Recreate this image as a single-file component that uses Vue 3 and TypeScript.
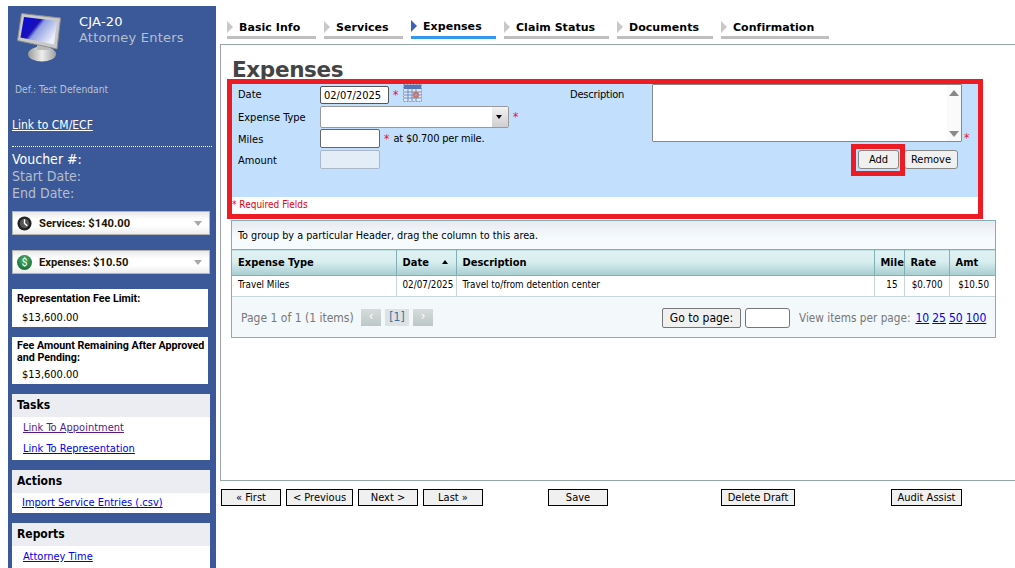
<script setup lang="ts">
const tabs = [
  { label: 'Basic Info', width: 89 },
  { label: 'Services', width: 79 },
  { label: 'Expenses', width: 85, active: true },
  { label: 'Claim Status', width: 105 },
  { label: 'Documents', width: 96 },
  { label: 'Confirmation', width: 108 },
]
const pageSizes = ['10', '25', '50', '100']
</script>

<template>
  <div class="page">
    <aside class="sidebar">
      <header class="brand">
        <svg class="monitor" width="46" height="50" viewBox="0 0 46 50">
          <defs>
            <linearGradient id="scr" x1="0" y1="0" x2="1" y2="0.6">
              <stop offset="0" stop-color="#0a0ad8" />
              <stop offset="0.45" stop-color="#1a10b8" />
              <stop offset="0.55" stop-color="#8f9fe0" />
              <stop offset="1" stop-color="#eef0fa" />
            </linearGradient>
            <linearGradient id="base" x1="0" y1="0" x2="1" y2="0">
              <stop offset="0" stop-color="#9a9a9a" />
              <stop offset="0.5" stop-color="#eeeeee" />
              <stop offset="1" stop-color="#a0a0a0" />
            </linearGradient>
          </defs>
          <ellipse cx="25" cy="41" rx="14" ry="7.5" fill="url(#base)" />
          <path d="M20 31h11l2 6H20z" fill="#bbb" />
          <path d="M4.500 0.500 L43.500 5 L40 36 L0.500 27.500 Z" fill="#c9c9c9" stroke="#8f8f8f" />
          <path d="M7 4 L40 8 L37 31.500 L3.500 24.500 Z" fill="url(#scr)" />
        </svg>
        <div class="brand-text">
          <div class="brand-title">CJA-20</div>
          <div class="brand-sub">Attorney Enters</div>
        </div>
      </header>
      <div class="def">Def.: Test Defendant</div>
      <a class="ecf" href="#">Link to CM/ECF</a>
      <div class="voucher">
        <div class="v-main">Voucher #:</div>
        <div>Start Date:</div>
        <div>End Date:</div>
      </div>

      <div class="total first">
        <svg width="15" height="15" viewBox="0 0 16 16">
          <circle cx="8" cy="8" r="7.500" fill="#222" />
          <circle cx="8" cy="8" r="5" fill="#555" />
          <path d="M8 3.500V8l3 2.500" stroke="#fff" stroke-width="1.500" fill="none" />
        </svg>
        <span class="total-label clock">Services: $140.00</span>
        <span class="total-arrow"></span>
      </div>
      <div class="total">
        <span class="coin">$</span>
        <span class="total-label">Expenses: $10.50</span>
        <span class="total-arrow"></span>
      </div>

      <section class="fee fee-one">
        <div class="fee-title">Representation Fee Limit:</div>
        <div class="fee-val spaced">$13,600.00</div>
      </section>
      <section class="fee fee-two">
        <div class="fee-title">Fee Amount Remaining After Approved and Pending:</div>
        <div class="fee-val">$13,600.00</div>
      </section>

      <section class="block tasks">
        <h3>Tasks</h3>
        <div class="links">
          <a class="visited" href="#">Link To Appointment</a>
          <a href="#">Link To Representation</a>
        </div>
      </section>
      <section class="block actions">
        <h3>Actions</h3>
        <div class="links tight"><a href="#">Import Service Entries (.csv)</a></div>
      </section>
      <section class="block reports">
        <h3>Reports</h3>
        <div class="links"><a href="#">Attorney Time</a></div>
      </section>
    </aside>

    <main class="main">
      <nav class="tabs">
        <div
          v-for="t in tabs"
          :key="t.label"
          class="tab"
          :class="{ active: t.active }"
          :style="{ width: t.width + 'px' }"
        >
          <span class="tab-arrow"></span>
          <span>{{ t.label }}</span>
        </div>
      </nav>

      <div class="content">
        <h1>Expenses</h1>

        <form class="form" @submit.prevent>
          <div class="panel">
            <div class="left">
              <div class="row r1">
                <label>Date</label>
                <input class="date" value="02/07/2025" />
                <span class="req">*</span>
                <svg class="cal" width="19" height="18" viewBox="0 0 19 18">
                  <rect x="0.500" y="0.500" width="18" height="17" fill="#dfe8f6" stroke="#8d97ad" stroke-dasharray="2 1" />
                  <rect x="1" y="1" width="17" height="4" fill="#5674b8" />
                  <path d="M1 8h17M1 11h17M1 14h17M5 5v12M9 5v12M13 5v12" stroke="#6f8cc4" stroke-width="1" />
                  <rect x="11" y="9" width="4" height="4" fill="none" stroke="#e0502a" stroke-width="1.200" />
                </svg>
              </div>
              <div class="row r2">
                <label>Expense Type</label>
                <div class="select-wrap">
                  <select></select>
                  <span class="select-btn"></span>
                </div>
                <span class="req">*</span>
              </div>
              <div class="row r3">
                <label>Miles</label>
                <input class="miles" />
                <span class="req">*</span>
                <span class="rate-note">at $0.700 per mile.</span>
              </div>
              <div class="row r4">
                <label>Amount</label>
                <input class="amount" disabled />
              </div>
            </div>
            <div class="right">
              <div class="desc">
                <label>Description</label>
                <div class="area-wrap">
                  <textarea></textarea>
                  <div class="scroll"><i class="up"></i><i class="down"></i></div>
                </div>
                <span class="req req-area">*</span>
              </div>
              <div class="form-btns">
                <button class="btn add" type="button">Add</button>
                <button class="btn" type="button">Remove</button>
              </div>
            </div>
          </div>
          <div class="required"><span>*</span> Required Fields</div>
          <div class="mark mark-form"></div>
          <div class="mark mark-add"></div>
        </form>

        <div class="grid">
          <div class="group">To group by a particular Header, drag the column to this area.</div>
          <table>
            <colgroup>
              <col style="width:164px" /><col style="width:60px" /><col />
              <col style="width:30px" /><col style="width:45px" /><col style="width:46px" />
            </colgroup>
            <thead>
              <tr>
                <th>Expense Type</th>
                <th>Date <span class="sort"></span></th>
                <th>Description</th>
                <th class="mile">Mile</th>
                <th>Rate</th>
                <th>Amt</th>
              </tr>
            </thead>
            <tbody>
              <tr>
                <td>Travel Miles</td>
                <td class="nowrap">02/07/2025</td>
                <td>Travel to/from detention center</td>
                <td class="num">15</td>
                <td class="num">$0.700</td>
                <td class="num">$10.50</td>
              </tr>
            </tbody>
          </table>
          <div class="pager">
            <span class="page-info">Page 1 of 1 (1 items)</span>
            <span class="pg">&lsaquo;</span>
            <span class="pg cur">[1]</span>
            <span class="pg">&rsaquo;</span>
            <button class="goto" type="button">Go to page:</button>
            <input class="goto-input" />
            <span class="per">View items per page:</span>
            <a v-for="s in pageSizes" :key="s" class="size" href="#">{{ s }}</a>
          </div>
        </div>
      </div>

      <footer class="footer">
        <button class="nav" style="width:60px">« First</button>
        <button class="nav" style="width:67px">&lt; Previous</button>
        <button class="nav" style="width:60px">Next &gt;</button>
        <button class="nav" style="width:60px">Last »</button>
        <button class="nav save" style="width:60px">Save</button>
        <button class="nav del" style="width:74px">Delete Draft</button>
        <button class="nav audit" style="width:71px">Audit Assist</button>
      </footer>
    </main>
  </div>
</template>

<style>
html, body { margin: 0; background: #fff; overflow: hidden; }
</style>

<style scoped>
.page {
  display: flex;
  width: 1015px;
  height: 568px;
  overflow: hidden;
  font-family: "DejaVu Sans", sans-serif;
  font-stretch: condensed;
  font-size: 11px;
  color: #000;
}
.sidebar {
  box-sizing: border-box;
  width: 208px;
  height: 562px;
  margin: 6px 0 0 8px;
  padding: 0 0 0 4px;
  background: #3b5998;
  overflow: hidden;
  flex: none;
}
.brand { display: flex; height: 60px; }
.monitor { margin: 7px 0 0 5px; flex: none; }
.brand-text { margin: 8px 0 0 16px; font-size: 13px; font-stretch: normal; line-height: 16px; letter-spacing: 0.200px; }
.brand-title { color: #fff; }
.brand-sub { color: #b6bfce; }
.def { margin: 17px 0 0 3px; color: #b8c2d4; font-size: 10.200px; line-height: 13px; height: 13px; }
.ecf { display: block; margin-top: 21px; color: #fff; font-size: 12px; line-height: 16px; width: max-content; }
.voucher {
  width: 200px;
  margin-top: 13px;
  padding-top: 4px;
  border-top: 1px dotted #fff;
  font-size: 14px;
  line-height: 17px;
  color: #b6bfce;
}
.v-main { color: #fff; }
.total {
  display: flex;
  align-items: center;
  box-sizing: border-box;
  width: 198px;
  height: 24px;
  margin-top: 15px;
  padding: 0 5px 0 4px;
  border: 1px solid #b3b3b3;
  background: linear-gradient(#e9e9e9, #fff 35%, #fff 65%, #ececec);
  font-family: Roboto, sans-serif;
  font-stretch: normal;
  font-weight: bold;
  font-size: 11.200px;
}
.total.first { margin-top: 9px; }
.total-label { margin-left: 7px; flex: 1; color: #1c1400; }
.total-label.clock { margin-left: 7px; }
.coin {
  width: 15px;
  height: 15px;
  border-radius: 50%;
  background: radial-gradient(circle at 50% 35%, #4fb268, #0a5a2a);
  color: #fff;
  font-size: 10px;
  line-height: 15px;
  text-align: center;
  font-weight: normal;
}
.total-arrow {
  width: 0;
  height: 0;
  margin-right: 2px;
  border-left: 4px solid transparent;
  border-right: 4px solid transparent;
  border-top: 5px solid #a8a8a8;
}
.fee {
  box-sizing: border-box;
  width: 196px;
  margin-top: 15px;
  padding: 4px 0 0 5px;
  background: #fff;
  font-size: 10.500px;
}
.fee-one { height: 38px; }
.fee-two { height: 47px; margin-top: 10px; padding-top: 3px; }
.fee-title { font-family: Roboto, sans-serif; font-stretch: normal; font-size: 10.700px; font-weight: bold; line-height: 12px; }
.fee-val { margin: 4px 0 0 5px; line-height: 13px; font-size: 11px; }
.fee-val.spaced { margin-top: 6px; }
.block { width: 198px; margin-top: 10px; background: #fff; overflow: hidden; }
.block h3 {
  margin: 0;
  height: 23px;
  padding-left: 5px;
  background: #ecedf3;
  font-size: 12px;
  line-height: 23px;
  font-weight: bold;
}
.links { display: flex; flex-direction: column; padding: 4px 0 0 11px; gap: 8px; }
.links a { color: #0000ee; font-size: 11px; line-height: 13px; }
.links a.visited { color: #551a8b; }
.links.tight { padding: 3px 0 0 10px; height: 17px; }
.tasks { height: 66px; }
.actions { height: 43px; }
.reports { height: 50px; }

.main { flex: 1; margin-left: 4px; min-width: 0; }
.tabs { display: flex; gap: 8px; padding: 15px 0 0 7px; height: 24px; }
.tab {
  box-sizing: border-box;
  display: flex;
  align-items: flex-start;
  height: 24px;
  padding-top: 6px;
  border-bottom: 3px solid #bfbfbf;
  font-weight: bold;
  font-size: 11px;
  font-stretch: normal;
  line-height: 14px;
  letter-spacing: 0.050px;
}
.tab.active { border-bottom-color: #3399ee; margin-top: -1px; height: 25px; }
.tab-arrow {
  width: 0;
  height: 0;
  margin: 0 6px 0 0;
  border-top: 6px solid transparent;
  border-bottom: 6px solid transparent;
  border-left: 6px solid #c8c8c8;
  flex: none;
}
.tab.active .tab-arrow { border-left-color: #3b62b5; }

.content {
  box-sizing: border-box;
  height: 437px;
  margin-top: 5px;
  padding: 0 19px 0 11px;
  border-top: 1px solid #98a5a5;
  border-left: 1px solid #98a5a5;
  border-bottom: 1px solid #98a5a5;
}
h1 {
  margin: 0;
  height: 39px;
  padding-top: 12px;
  box-sizing: border-box;
  color: #444;
  font-size: 21.500px;
  line-height: 26px;
  font-stretch: normal;
  font-weight: bold;
  letter-spacing: -0.350px;
}
.form { position: relative; width: 746px; }
.panel { display: flex; height: 113px; background: #c2dffd; }
.left { width: 338px; padding: 1px 0 0 6px; box-sizing: border-box; flex: none; }
.row { display: flex; align-items: center; }
.row label { width: 82px; flex: none; font-size: 11px; margin-top: 2px; }
.r1 label { margin-top: 0; margin-bottom: 2px; }
.r1 { height: 20px; }
.r2 { height: 23px; }
.r3 { height: 21px; }
.r4 { height: 21px; }
input, select, textarea, button { font-family: inherit; font-stretch: inherit; box-sizing: border-box; }
input:focus { outline: none; }
.date {
  width: 69px;
  height: 18px;
  border: 1px solid #555;
  border-radius: 2px;
  padding: 0 0 0 3px;
  font-size: 11px;
  background: #fff;
}
.req { color: #ee1133; margin-left: 4px; font-size: 12px; }
.cal { margin: -5px 0 0 5px; }
.select-wrap { position: relative; width: 189px; height: 22px; }
select {
  appearance: none;
  width: 100%;
  height: 100%;
  border: 1px solid #9a9a9a;
  border-radius: 2px;
  background: #fff;
}
.select-btn {
  position: absolute;
  right: 1px;
  top: 1px;
  width: 16px;
  height: 20px;
  background: linear-gradient(#f2f2f2, #cfcfcf);
}
.select-btn::after {
  content: "";
  position: absolute;
  left: 4px;
  top: 8px;
  border-left: 3.500px solid transparent;
  border-right: 3.500px solid transparent;
  border-top: 4px solid #000;
}
.miles, .amount { width: 60px; height: 19px; border-radius: 2px; }
.miles { border: 1px solid #666; background: #fff; }
.amount { border: 1px solid #a9b7c6; background: #e2edf7; }
.rate-note { margin-left: 4px; font-size: 11px; letter-spacing: -0.200px; }

.right { flex: 1; min-width: 0; }
.desc { display: flex; }
.desc label { width: 82px; flex: none; margin-top: 4px; font-size: 11px; letter-spacing: -0.200px; line-height: 14px; }
.area-wrap { position: relative; width: 310px; height: 58px; }
textarea {
  display: block;
  width: 100%;
  height: 100%;
  border: 1px solid #888;
  border-radius: 1px;
  background: #fff;
  resize: none;
}
.scroll { position: absolute; right: 1px; top: 1px; bottom: 1px; width: 14px; background: #fafafa; }
.scroll i { position: absolute; left: 2px; border-left: 5px solid transparent; border-right: 5px solid transparent; }
.up { top: 5px; border-bottom: 6px solid #8a8a8a; }
.down { bottom: 4px; border-top: 6px solid #8a8a8a; }
.req-area { align-self: flex-end; margin: 0 0 -1px 2px; line-height: 10px; }
.form-btns { display: flex; justify-content: flex-end; gap: 5px; margin: 8px 20px 0 0; }
.btn {
  height: 19px;
  width: 41px;
  padding: 0;
  border: 1px solid #888;
  border-radius: 3px;
  background: #f0f0f0;
  font-size: 11px;
  color: #000;
}
.btn:last-child { width: 54px; }
.required { height: 17px; padding-left: 0; font-size: 10px; line-height: 15px; color: #e3000f; }
.mark { position: absolute; border: 5px solid #ed1c24; pointer-events: none; }
.mark-form { left: -5px; top: -5px; right: -5px; bottom: -5px; }
.mark-add { left: 619px; top: 60px; width: 44px; height: 22px; }

.grid {
  box-sizing: border-box;
  width: 765px;
  height: 118px;
  margin: 6px 0 0 -1px;
  border: 1px solid #7fb0b5;
  background: #f3f8fb;
}
.group {
  height: 28px;
  padding-left: 6px;
  box-sizing: border-box;
  background: linear-gradient(#e8e9ee, #f6fbfe 60%);
  font-size: 10.750px;
  line-height: 29px;
}
table { width: 100%; border-collapse: collapse; table-layout: fixed; background: #fff; }
th {
  height: 26px;
  padding: 0 0 0 6px;
  box-sizing: border-box;
  border-top: 1px solid #7fb0b5;
  border-bottom: 1px solid #7fb0b5;
  border-left: 1px solid #7fb0b5;
  background: linear-gradient(#e0f1f3, #d8eef0 45%, #a8cdd0);
  text-align: left;
  font-size: 11px;
  font-weight: bold;
  white-space: nowrap;
  overflow: hidden;
}
th:first-child, td:first-child { border-left: none; }
th.mile { padding-left: 6px; }
td {
  height: 21px;
  padding: 0 0 3px 6px;
  box-sizing: border-box;
  border-left: 1px solid #c7d6d9;
  border-bottom: 1px solid #c7d6d9;
  font-size: 9.800px;
}
.nowrap { white-space: nowrap; padding-left: 6px; overflow: hidden; }
.num { text-align: right; padding: 0 6px 3px 0; }
.sort {
  display: inline-block;
  margin: 0 0 2px 10px;
  border-left: 3.500px solid transparent;
  border-right: 3.500px solid transparent;
  border-bottom: 4px solid #000;
}
.pager { display: flex; align-items: center; height: 41px; padding-left: 9px; font-size: 12px; }
.page-info { color: #777; width: 120px; flex: none; }
.pg {
  box-sizing: border-box;
  width: 20px;
  height: 17px;
  margin-right: 4px;
  background: linear-gradient(#d5dcdc, #bcc7c7);
  color: #fff;
  font-size: 13px;
  line-height: 14px;
  text-align: center;
}
.pg.cur { width: 24px; background: #dde3e5; color: #3a6ea5; font-size: 12px; line-height: 17px; }
.goto {
  margin-left: 225px;
  width: 79px;
  height: 20px;
  padding: 0;
  border: 1px solid #777;
  border-radius: 2px;
  background: #f0f0f0;
  font-size: 12px;
  flex: none;
}
.goto-input { width: 45px; height: 20px; margin-left: 4px; border: 1px solid #777; border-radius: 3px; background: #fff; flex: none; }
.per { margin-left: 9px; color: #777; font-size: 11.700px; white-space: nowrap; flex: none; margin-right: 2px; }
.size { margin-left: 3px; color: #0000ee; font-size: 12px; }

.footer { display: flex; margin-top: 8px; padding-left: 1px; gap: 5px; }
.nav {
  height: 17px;
  padding: 0;
  border: 1px solid #000;
  border-radius: 0;
  background: #f0f0f0;
  font-size: 11px;
  line-height: 15px;
  color: #000;
}
.save { margin-left: 60px; }
.del { margin-left: 108px; }
.audit { margin-left: 91px; }
</style>
